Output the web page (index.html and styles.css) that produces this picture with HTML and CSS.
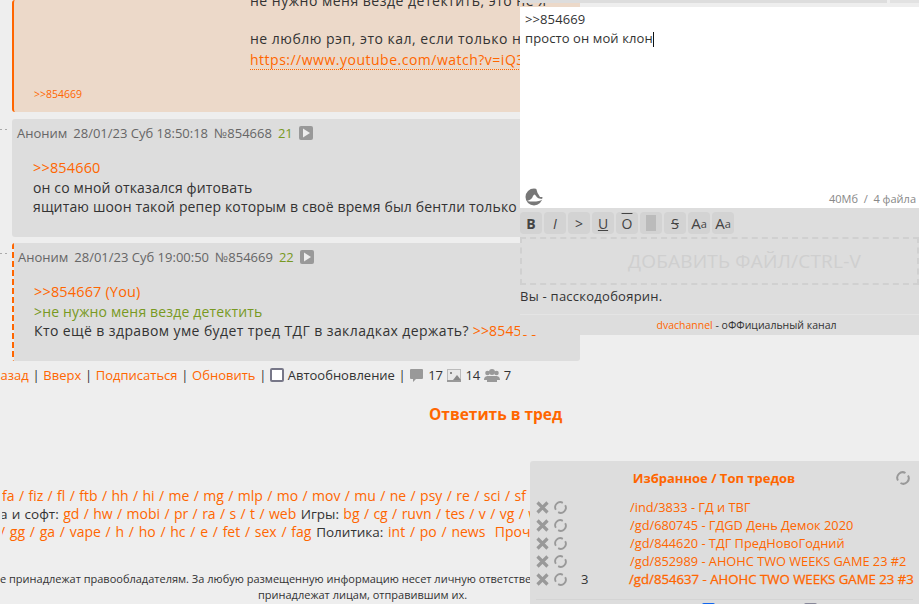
FILE: index.html
```html
<!DOCTYPE html>
<html lang="en">
<head>
    <meta charset="UTF-8">
    <meta name="viewport" content="width=device-width, initial-scale=1.0">
    <title>/gd/ - тред</title>
    <link rel="stylesheet" href="styles.css">
</head>
<body>
    <div class="thread">
        <div class="post post-op">
            <div class="post-body">
                <p>не нужно меня везде детектить, это не я</p>
                <p class="gap">не люблю рэп, это кал, если только не такой</p>
                <p class="gap-small"><a class="link-dotted" href="#">https://www.youtube.com/watch?v=iQ3xyz</a></p>
            </div>
            <div class="replies"><a href="#">&gt;&gt;854669</a></div>
        </div>

        <div class="post post-reply">
            <span class="dots"></span>
            <div class="post-head">
                <span>Аноним</span>
                <span>28/01/23 Суб 18:50:18</span>
                <span>№854668</span>
                <span class="count">21</span>
                <span class="play"><svg width="14" height="14" viewBox="0 0 14 14"><path d="M4 2.500 L11 7 L4 11.500 Z" fill="#eee"/></svg></span>
            </div>
            <div class="message">
                <a class="big-link" href="#">&gt;&gt;854660</a><br>
                он со мной отказался фитовать<br>
                ящитаю шоон такой репер которым в своё время был бентли только лучше
            </div>
        </div>

        <div class="post post-reply post-mine">
            <span class="dots"></span>
            <div class="post-head">
                <span>Аноним</span>
                <span>28/01/23 Суб 19:00:50</span>
                <span>№854669</span>
                <span class="count">22</span>
                <span class="play"><svg width="14" height="14" viewBox="0 0 14 14"><path d="M4 2.500 L11 7 L4 11.500 Z" fill="#eee"/></svg></span>
            </div>
            <div class="message">
                <a class="big-link" href="#">&gt;&gt;854667 (You)</a><br>
                <span class="quote">&gt;не нужно меня везде детектить</span><br>
                <span class="wide-line">Кто ещё в здравом уме будет тред ТДГ в закладках держать?</span> <a href="#">&gt;&gt;854590</a>
            </div>
        </div>
    </div>

    <div class="thread-nav">
        <a href="#">Назад</a> <span>|</span>
        <a href="#">Вверх</a> <span>|</span>
        <a href="#">Подписаться</a> <span>|</span>
        <a href="#">Обновить</a> <span>|</span>
        <span class="check"></span> <span>Автообновление</span> <span>|</span>
        <svg width="15" height="15" viewBox="0 0 15 15"><path d="M2 1 H13 Q14 1 14 2 V10 Q14 11 13 11 H7 L4 14 V11 H2 Q1 11 1 10 V2 Q1 1 2 1 Z" fill="#999"/></svg>
        <span>17</span>
        <svg width="15" height="15" viewBox="0 0 15 15"><rect x="0.500" y="1.500" width="13" height="12" fill="#e8e8e8" stroke="#bbb"/><path d="M6 12 L10 7 L14 12 Z" fill="#888"/><rect x="3" y="4" width="2" height="2" fill="#888"/><rect x="0" y="12" width="14" height="2" fill="#999"/></svg>
        <span>14</span>
        <svg width="16" height="15" viewBox="0 0 16 15"><circle cx="3.500" cy="5" r="2.300" fill="#999"/><circle cx="12.500" cy="5" r="2.300" fill="#999"/><circle cx="8" cy="4" r="3" fill="#999"/><path d="M0 12 C0 8 3 8 5 8 H11 C13 8 16 8 16 12 L13 12 V14 H3 V12 Z" fill="#999"/></svg>
        <span>7</span>
    </div>

    <div class="reply-link"><a href="#">Ответить в тред</a></div>

    <div class="boards">
        <div class="board-row">fa / fiz / fl / ftb / hh / hi / me / mg / mlp / mo / mov / mu / ne / psy / re / sci / sf</div>
        <div class="board-row"><span class="dark">а и софт:</span> gd / hw / mobi / pr / ra / s / t / web <span class="dark">Игры:</span> bg / cg / ruvn / tes / v / vg / wh</div>
        <div class="board-row">/ gg / ga / vape / h / ho / hc / e / fet / sex / fag <span class="dark">Политика:</span> int / po / news &nbsp;Прочие</div>
    </div>

    <div class="copyright">
        <div>е принадлежат правообладателям. За любую размещенную информацию несет личную ответственность</div>
        <div class="copyright-center">принадлежат лицам, отправившим их.</div>
    </div>

    <div class="top-strip">
        <div class="strip-left"></div>
        <div class="strip-right"></div>
    </div>

    <form class="reply-form">
        <div class="textarea">
            <div class="textarea-text">&gt;&gt;854669<br>просто он мой клон<span class="caret"></span></div>
            <div class="textarea-foot">
                <svg width="18" height="18" viewBox="0 0 18 18"><circle cx="9" cy="9" r="8.500" fill="#777"/><path d="M11 0 H18 V9 L15 9 Q12 5 11 0 Z" fill="#fff"/><path d="M2 13 C5 12 7 11 8 8 C9 6 10 6 11 8 C12 10 14 11 18 11 C15 14 7 14 2 13 Z" fill="#fff"/></svg>
                <span class="limit">40Мб &nbsp;/ &nbsp;4 файла</span>
            </div>
        </div>
        <div class="toolbar">
            <span class="tool tool-b">B</span>
            <span class="tool tool-i">I</span>
            <span class="tool">&gt;</span>
            <span class="tool tool-u">U</span>
            <span class="tool tool-o">O</span>
            <span class="tool"><span class="spoiler"></span></span>
            <span class="tool tool-s">S</span>
            <span class="tool tool-size">A<sup>a</sup></span>
            <span class="tool tool-size">A<sub>a</sub></span>
        </div>
        <div class="dropzone">ДОБАВИТЬ ФАЙЛ/CTRL-V</div>
        <div class="pass">Вы - пасскодобоярин.</div>
        <div class="channel"><a href="#">dvachannel</a> - оФФициальный канал</div>
    </form>

    <div class="favorites">
        <div class="fav-head">
            <span class="fav-title">Избранное / Топ тредов</span>
            <svg class="spin-head" width="14" height="14" viewBox="0 0 14 14"><path d="M2 9.500 A5.500 5.500 0 0 1 9.500 2 M12 4.500 A5.500 5.500 0 0 1 4.500 12" fill="none" stroke="#999" stroke-width="2"/></svg>
        </div>
        <div class="fav-row">
            <svg width="13" height="13" viewBox="0 0 13 13"><path d="M1.500 1.500 L11.500 11.500 M11.500 1.500 L1.500 11.500" stroke="#999" stroke-width="3.200"/></svg>
            <svg width="13" height="13" viewBox="0 0 14 14"><path d="M2 9.500 A5.500 5.500 0 0 1 9.500 2 M12 4.500 A5.500 5.500 0 0 1 4.500 12" fill="none" stroke="#999" stroke-width="2"/></svg>
            <span class="fav-num"></span>
            <a href="#">/ind/3833 - ГД и ТВГ</a>
        </div>
        <div class="fav-row">
            <svg width="13" height="13" viewBox="0 0 13 13"><path d="M1.500 1.500 L11.500 11.500 M11.500 1.500 L1.500 11.500" stroke="#999" stroke-width="3.200"/></svg>
            <svg width="13" height="13" viewBox="0 0 14 14"><path d="M2 9.500 A5.500 5.500 0 0 1 9.500 2 M12 4.500 A5.500 5.500 0 0 1 4.500 12" fill="none" stroke="#999" stroke-width="2"/></svg>
            <span class="fav-num"></span>
            <a href="#">/gd/680745 - ГДGD День Демок 2020</a>
        </div>
        <div class="fav-row">
            <svg width="13" height="13" viewBox="0 0 13 13"><path d="M1.500 1.500 L11.500 11.500 M11.500 1.500 L1.500 11.500" stroke="#999" stroke-width="3.200"/></svg>
            <svg width="13" height="13" viewBox="0 0 14 14"><path d="M2 9.500 A5.500 5.500 0 0 1 9.500 2 M12 4.500 A5.500 5.500 0 0 1 4.500 12" fill="none" stroke="#999" stroke-width="2"/></svg>
            <span class="fav-num"></span>
            <a href="#">/gd/844620 - ТДГ ПредНовоГодний</a>
        </div>
        <div class="fav-row">
            <svg width="13" height="13" viewBox="0 0 13 13"><path d="M1.500 1.500 L11.500 11.500 M11.500 1.500 L1.500 11.500" stroke="#999" stroke-width="3.200"/></svg>
            <svg width="13" height="13" viewBox="0 0 14 14"><path d="M2 9.500 A5.500 5.500 0 0 1 9.500 2 M12 4.500 A5.500 5.500 0 0 1 4.500 12" fill="none" stroke="#999" stroke-width="2"/></svg>
            <span class="fav-num"></span>
            <a href="#">/gd/852989 - АНОНС TWO WEEKS GAME 23 #2</a>
        </div>
        <div class="fav-row fav-current">
            <svg width="13" height="13" viewBox="0 0 13 13"><path d="M1.500 1.500 L11.500 11.500 M11.500 1.500 L1.500 11.500" stroke="#999" stroke-width="3.200"/></svg>
            <svg width="13" height="13" viewBox="0 0 14 14"><path d="M2 9.500 A5.500 5.500 0 0 1 9.500 2 M12 4.500 A5.500 5.500 0 0 1 4.500 12" fill="none" stroke="#999" stroke-width="2"/></svg>
            <span class="fav-num">3</span>
            <a href="#">/gd/854637 - АНОНС TWO WEEKS GAME 23 #3</a>
        </div>
        <div class="fav-foot">
            <span class="fav-check fav-check-on"></span>
            <span class="fav-check"></span>
        </div>
    </div>
</body>
</html>
```

FILE: styles.css
```css
html, body {
    height: 604px;
    overflow: hidden;
}

body {
    font-family: "Open Sans", sans-serif;
    font-size: 14px;
    margin: 0;
    padding: 0;
    background-color: #eeeeee;
    color: #333;
}

a {
    color: #ff6600;
    text-decoration: none;
}

p {
    margin: 0;
}

.thread {
    display: flex;
    flex-direction: column;
    gap: 6px;
    padding-left: 12px;
}

.post {
    position: relative;
    width: 568px;
    border-radius: 3px;
    box-sizing: border-box;
}

.post-op {
    height: 112px;
    margin-bottom: 1px;
    padding: 0 0 11px 20px;
    display: flex;
    flex-direction: column;
    justify-content: flex-end;
    overflow: hidden;
    background-color: #ecd9c9;
    border-left: 2px solid #ff6600;
}

.post-body {
    margin-left: 216px;
    line-height: 20px;
    white-space: nowrap;
    letter-spacing: 0.5px;
}

.post-body .gap {
    margin-top: 18px;
}

.post-body .gap-small {
    margin-top: 1px;
}

.link-dotted {
    border-bottom: 1px dotted #ff6600;
}

.replies {
    margin-top: 17px;
    font-size: 10.5px;
    line-height: 14px;
}

.post-reply {
    height: 118px;
    background-color: #dddddd;
    padding: 5px 0 0 5px;
}

/* the user's own post, dashes drawn longer than a dashed border gives */
.post-mine {
    padding-left: 6px;
    background-image: repeating-linear-gradient(to bottom, #ff6600 0, #ff6600 6px, #eeeeee 6px, #eeeeee 9px);
    background-size: 2px 100%;
    background-repeat: no-repeat;
}

.dots {
    position: absolute;
    left: -12px;
    top: 10px;
    width: 8px;
    height: 1px;
    background-image: linear-gradient(to right, #aaa 2px, transparent 2px);
    background-size: 5px 1px;
}

.post-head {
    display: flex;
    align-items: center;
    gap: 6px;
    height: 18px;
    color: #666;
    font-size: 13px;
}

.count {
    color: #789922;
}

.play {
    display: flex;
    width: 14px;
    height: 14px;
    background-color: #999;
    border-radius: 2px;
}

.message {
    margin: 16px 0 0 16px;
    line-height: 19.5px;
    letter-spacing: 0.15px;
    white-space: nowrap;
    overflow: hidden;
}

.big-link {
    font-size: 14.5px;
}

.quote {
    color: #789922;
}

.wide-line {
    letter-spacing: 0.4px;
}

.thread-nav {
    display: flex;
    align-items: center;
    gap: 3.700px;
    height: 18px;
    margin: 5px 0 0 -9px;
    white-space: nowrap;
    font-size: 13px;
}

.check {
    display: inline-block;
    width: 10px;
    height: 10px;
    background-color: #fff;
    border: 2px solid #778;
    border-radius: 2px;
}

.reply-link {
    margin: 19px 0 0 429px;
    font-size: 15.5px;
    font-weight: bold;
    line-height: 22px;
}

.boards {
    margin-top: 62px;
    margin-left: 2px;
    width: 528px;
    overflow: hidden;
    white-space: nowrap;
    color: #ff6600;
    line-height: 18px;
    font-size: 14px;
    word-spacing: 0.75px;
}

.boards .board-row:nth-child(n+2) {
    margin-left: -2px;
}

.boards .board-row:nth-child(3) {
    word-spacing: 1.100px;
}

.dark {
    color: #333;
    font-size: 13.500px;
}

.copyright {
    margin-top: 30px;
    width: 530px;
    overflow: hidden;
    white-space: nowrap;
    font-size: 11px;
    line-height: 16px;
}

.copyright-center {
    margin-left: 258px;
}

/* windows that float over the page */
.top-strip {
    position: absolute;
    top: 0;
    left: 520px;
    width: 399px;
    height: 3px;
    display: flex;
    justify-content: space-between;
}

.strip-left {
    width: 367px;
    background-color: #ddd;
}

.strip-right {
    width: 29px;
    background-color: #e2e2e2;
}

.reply-form {
    position: absolute;
    top: 7px;
    left: 520px;
    width: 399px;
    height: 328px;
    background-color: #dddddd;
}

.textarea {
    height: 201px;
    background-color: #fff;
    display: flex;
    flex-direction: column;
    justify-content: space-between;
    box-sizing: border-box;
    padding: 3px 3px 2px 5px;
}

.textarea-text {
    line-height: 19px;
    font-size: 13px;
    letter-spacing: 0.1px;
    color: #333;
}

.caret {
    display: inline-block;
    width: 1px;
    height: 15px;
    background-color: #111;
    vertical-align: text-bottom;
}

.textarea-foot {
    display: flex;
    justify-content: space-between;
    align-items: flex-end;
}

.limit {
    color: #888;
    font-size: 11px;
}

.toolbar {
    display: flex;
    gap: 2px;
    padding-top: 4px;
}

.tool {
    display: flex;
    align-items: center;
    justify-content: center;
    width: 22px;
    height: 22px;
    background-color: #d3d3d3;
    border-radius: 4px;
    font-size: 14px;
    color: #444;
}

.tool-size {
    font-size: 15px;
}

.tool sup, .tool sub {
    font-size: 11px;
    line-height: 1;
}

.tool-b {
    font-weight: bold;
}

.tool-i {
    font-style: italic;
}

.tool-u {
    text-decoration: underline;
}

.tool-o {
    text-decoration: overline;
}

.tool-s {
    text-decoration: line-through;
}

.spoiler {
    width: 10px;
    height: 16px;
    background-color: #bbb;
}

.dropzone {
    margin-top: 3px;
    height: 48px;
    box-sizing: border-box;
    border: 2px dashed #d0d0d0;
    display: flex;
    align-items: center;
    justify-content: center;
    padding-left: 50px;
    color: #cfcfcf;
    font-size: 19px;
    letter-spacing: 0.2px;
}

.pass {
    padding-top: 2px;
    line-height: 18px;
    font-size: 13px;
    letter-spacing: 0.25px;
}

.channel {
    margin-top: 9px;
    padding: 1px 0 0 54px;
    border-top: 1px solid #e4e4e4;
    text-align: center;
    font-size: 10.5px;
    line-height: 18px;
}

.favorites {
    position: absolute;
    top: 461px;
    left: 530px;
    width: 389px;
    height: 143px;
    box-sizing: border-box;
    padding: 9px 6px 0 6px;
    overflow: hidden;
    background-color: #dddddd;
    border-radius: 3px 0 0 0;
    font-size: 13px;
    color: #333;
}

.fav-head {
    display: flex;
    justify-content: center;
    align-items: center;
    height: 16px;
    margin-bottom: 12px;
    position: relative;
}

.fav-title {
    color: #ff6600;
    font-weight: bold;
    padding-right: 21px;
}

.spin-head {
    position: absolute;
    right: 3px;
    top: 1px;
}

.fav-row {
    display: flex;
    align-items: center;
    height: 18px;
    gap: 5px;
    white-space: nowrap;
}

.fav-row svg {
    flex-shrink: 0;
}

.fav-num {
    flex-shrink: 0;
    width: 53px;
    padding-left: 9px;
    box-sizing: border-box;
}

.fav-row a {
    font-size: 12.800px;
}

.fav-current a {
    margin-left: -1px;
    font-size: 13.200px;
    -webkit-text-stroke: 0.3px #ff6600;
}

.fav-foot {
    display: flex;
    gap: 89px;
    margin-top: 11px;
    padding: 3px 0 0 166px;
    border-top: 1px solid #d4d4d4;
}

.fav-check {
    flex-shrink: 0;
    width: 13px;
    height: 13px;
    border-radius: 2px;
    background-color: #888899;
}

.fav-check-on {
    background-color: #1166ee;
}
```
